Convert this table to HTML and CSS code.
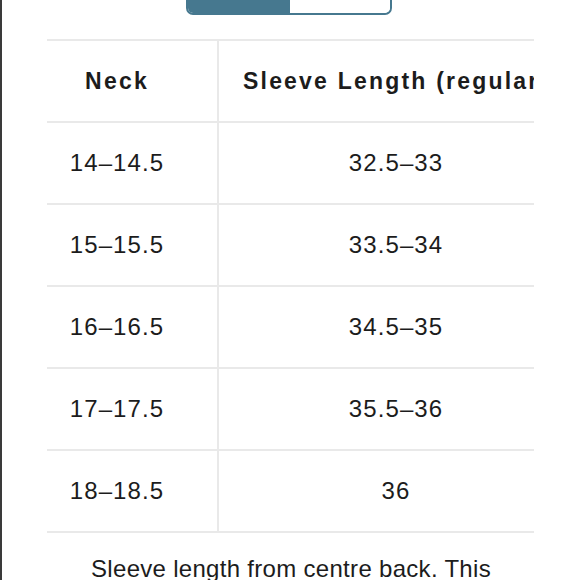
FILE: index.html
```html
<!DOCTYPE html>
<html>
<head>
<meta charset="utf-8">
<link rel="stylesheet" href="styles.css">
</head>
<body>
<div class="frame">
  <div class="seg">
    <div class="seg-on"></div>
    <div class="seg-off"></div>
  </div>
  <div class="table-wrap">
    <div class="table">
      <div class="row head">
        <div class="cell c1">Neck</div>
        <div class="cell c2">Sleeve Length (regular fit)</div>
      </div>
      <div class="row">
        <div class="cell c1">14–14.5</div>
        <div class="cell c2">32.5–33</div>
      </div>
      <div class="row">
        <div class="cell c1">15–15.5</div>
        <div class="cell c2">33.5–34</div>
      </div>
      <div class="row">
        <div class="cell c1">16–16.5</div>
        <div class="cell c2">34.5–35</div>
      </div>
      <div class="row">
        <div class="cell c1">17–17.5</div>
        <div class="cell c2">35.5–36</div>
      </div>
      <div class="row">
        <div class="cell c1">18–18.5</div>
        <div class="cell c2">36</div>
      </div>
    </div>
  </div>
  <p class="note">Sleeve length from centre back. This</p>
</div>
</body>
</html>
```
FILE: styles.css
```css
html, body {
  margin: 0;
  padding: 0;
  background: #ffffff;
}
.frame {
  height: 580px;
  overflow: hidden;
  border-left: 2px solid #3a3a3a;
  box-sizing: border-box;
  font-family: "Liberation Sans", Arial, sans-serif;
  color: #1c1c1c;
}
.seg {
  display: flex;
  width: 206px;
  height: 40px;
  margin: -25px 0 0 184px;
  border: 2px solid #46788f;
  border-radius: 0 0 7px 7px;
  overflow: hidden;
  box-sizing: border-box;
}
.seg-on {
  width: 102px;
  background: #46788f;
}
.seg-off {
  flex: 1;
  background: #ffffff;
  border-radius: 0 0 5px 5px;
}
.table-wrap {
  margin: 24px 0 0 45px;
  width: 487px;
  overflow: hidden;
}
.table {
  width: 526px;
  border-top: 2px solid #e9e9e9;
}
.row {
  display: grid;
  grid-template-columns: 172px 354px;
  height: 82px;
  border-bottom: 2px solid #e9e9e9;
  box-sizing: border-box;
}
.cell {
  display: flex;
  align-items: center;
  justify-content: center;
  white-space: nowrap;
  font-size: 24px;
  letter-spacing: 1.1px;
}
.c1 {
  border-right: 2px solid #e9e9e9;
  padding-right: 30px;
}
.head .cell {
  font-weight: bold;
  font-size: 23px;
  letter-spacing: 2.2px;
}
.head .c2 {
  justify-content: flex-start;
  padding-left: 24px;
}
.note {
  margin: 0;
  padding-top: 19px;
  font-size: 24px;
  line-height: 34px;
  text-align: center;
  letter-spacing: 0.3px;
}
```
